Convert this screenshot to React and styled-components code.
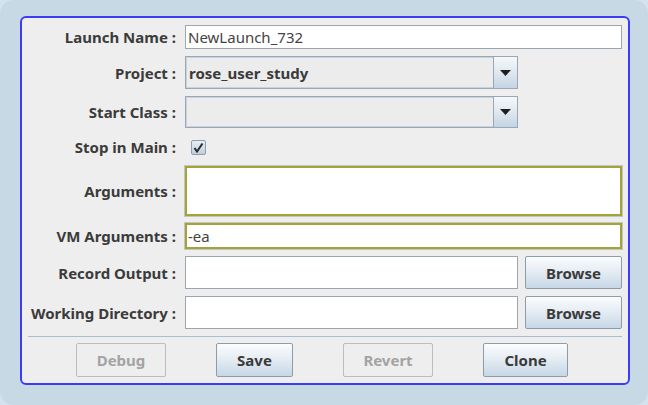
import React from 'react'
import styled, { createGlobalStyle } from 'styled-components'

const GlobalStyle = createGlobalStyle`
    html, body {
        margin: 0;
        padding: 0;
        background: #d3e2ec;
        font-family: "Noto Sans", "DejaVu Sans", sans-serif;
    }
`

const Frame = styled.div`
    width: 648px;
    height: 405px;
    box-sizing: border-box;
    padding: 16px 18px 20px 20px;
    background: #c6d9e5;
    border-radius: 14px;
`

const Panel = styled.div`
    height: 100%;
    box-sizing: border-box;
    border: 2px solid #3c3cf6;
    border-radius: 6px;
    background: #eeeeee;
    padding: 7px 6px 6px 6px;
    display: flex;
    flex-direction: column;
`

const Form = styled.div`
    display: grid;
    grid-template-columns: 148px 1fr 97px;
    grid-template-rows: 24px 33px 32px 24px 50px 26px 33px 33px;
    column-gap: 7px;
    row-gap: 7px;
    padding-left: 2px;
`

const Label = styled.div`
    grid-column: 1;
    display: flex;
    align-items: center;
    justify-content: flex-end;
    padding-right: 2px;
    font-size: 15px;
    font-weight: 700;
    color: #3b3b3b;
    white-space: nowrap;
`

const TextField = styled.div`
    grid-column: ${p => (p.$wide ? '2 / 4' : '2')};
    box-sizing: border-box;
    background: #ffffff;
    border: ${p => (p.$focus ? '2px solid #a4a338' : '1px solid #9ba6b0')};
    box-shadow: ${p => (p.$focus ? '0 0 0 1px #c4c4c4' : 'none')};
    display: flex;
    align-items: ${p => (p.$multi ? 'flex-start' : 'center')};
    padding: 0 ${p => (p.$focus ? '1px' : '2px')};
    font-size: 15px;
    color: #444444;
`

const Combo = styled.div`
    grid-column: 2;
    display: flex;
    box-sizing: border-box;
    border: 1px solid #98a8b7;
    box-shadow: inset 0 0 0 1px #c9d3dc;
    background: #ececec;
`

const ComboValue = styled.div`
    flex: 1;
    display: flex;
    align-items: center;
    padding-left: 3px;
    font-size: 15px;
    font-weight: 700;
    color: #3a3a3a;
`

const ComboArrow = styled.div`
    width: 23px;
    border-left: 1px solid #98a8b7;
    background: linear-gradient(#f6f8fa, #dde6ee 55%, #c3d4e3);
    display: flex;
    align-items: center;
    justify-content: center;
`

const CheckCell = styled.div`
    grid-column: 2;
    display: flex;
    align-items: center;
    padding-left: 6px;
`

const Check = styled.div`
    width: 15px;
    height: 15px;
    box-sizing: border-box;
    border: 1px solid #8b9dae;
    border-radius: 2px;
    background: linear-gradient(#e8eef4, #bfcfdd);
    display: flex;
    align-items: center;
    justify-content: center;
`

const Separator = styled.div`
    height: 1px;
    background: #a9bed3;
    margin-top: 7px;
`

const ButtonRow = styled.div`
    display: flex;
    justify-content: center;
    gap: 50px;
    margin-top: 6px;
    padding-right: 6px;
`

const Button = styled.button`
    grid-column: ${p => p.$col || 'auto'};
    width: ${p => (p.$w ? `${p.$w}px` : 'auto')};
    height: ${p => (p.$w ? '34px' : '100%')};
    box-sizing: border-box;
    padding: 0;
    border: 1px solid ${p => (p.disabled ? '#bcbcbc' : '#8d9cab')};
    border-radius: 2px;
    background: ${p =>
        p.disabled ? '#eeeeee' : 'linear-gradient(#fbfcfd, #e3ebf2 50%, #c6d7e6)'};
    font-family: "Noto Sans", "DejaVu Sans", sans-serif;
    font-size: 15px;
    font-weight: 700;
    color: ${p => (p.disabled ? '#a3a3a3' : '#3a3a3a')};
`

const DropArrow = () => (
    <svg width="11" height="6" viewBox="0 0 11 6">
        <path d="M0 0 H11 L5.5 6 Z" fill="#1e1e1e" />
    </svg>
)

const Tick = () => (
    <svg width="11" height="11" viewBox="0 0 11 11">
        <path d="M1.5 6 L4 9.5 L9.5 1.5" fill="none" stroke="#2a2a2a" strokeWidth="2" />
    </svg>
)

const App = () => {
    return (
        <React.Fragment>
            <GlobalStyle />
            <Frame>
                <Panel>
                    <Form>
                        <Label>Launch Name :</Label>
                        <TextField $wide>NewLaunch_732</TextField>

                        <Label>Project :</Label>
                        <Combo>
                            <ComboValue>rose_user_study</ComboValue>
                            <ComboArrow><DropArrow /></ComboArrow>
                        </Combo>

                        <Label>Start Class :</Label>
                        <Combo>
                            <ComboValue />
                            <ComboArrow><DropArrow /></ComboArrow>
                        </Combo>

                        <Label>Stop in Main :</Label>
                        <CheckCell>
                            <Check><Tick /></Check>
                        </CheckCell>

                        <Label>Arguments :</Label>
                        <TextField $wide $focus $multi />

                        <Label>VM Arguments :</Label>
                        <TextField $wide $focus>-ea</TextField>

                        <Label>Record Output :</Label>
                        <TextField />
                        <Button $col="3">Browse</Button>

                        <Label>Working Directory :</Label>
                        <TextField />
                        <Button $col="3">Browse</Button>
                    </Form>

                    <Separator />

                    <ButtonRow>
                        <Button $w={90} disabled>Debug</Button>
                        <Button $w={77}>Save</Button>
                        <Button $w={90} disabled>Revert</Button>
                        <Button $w={85}>Clone</Button>
                    </ButtonRow>
                </Panel>
            </Frame>
        </React.Fragment>
    )
}

export default App
